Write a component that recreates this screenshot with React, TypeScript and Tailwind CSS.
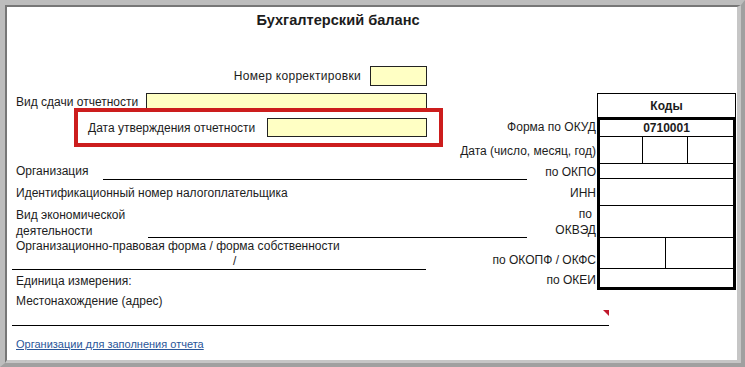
const CODE_ROWS = [
  { label: "Форма по ОКУД", h: "h-[20px]" },
  { label: "Дата (число, месяц, год)", h: "h-[27px]" },
  { label: "по ОКПО", h: "h-[15px]" },
  { label: "ИНН", h: "h-[27px]" },
];

function YellowBox({ className }: { className: string }) {
  return <div className={`bg-[#ffffc4] border border-[#222] ${className}`} />;
}

function CodesTable() {
  return (
    <div className="w-[139px] flex flex-col">
      <div className="h-[24px] border border-b-0 border-black flex items-center justify-center font-bold">
        Коды
      </div>
      <div className="border-[3px] border-t-[3px] border-black flex flex-col">
        <div className="h-[17px] border-b border-black flex items-center justify-center font-bold">0710001</div>
        <div className="h-[27px] border-b border-black grid grid-cols-[43px_45px_1fr]">
          <div className="border-r border-black" />
          <div className="border-r border-black" />
          <div />
        </div>
        <div className="h-[15px] border-b border-black" />
        <div className="h-[27px] border-b border-black" />
        <div className="h-[32px] border-b border-black" />
        <div className="h-[31px] border-b border-black grid grid-cols-[66px_1fr]">
          <div className="border-r border-black" />
          <div />
        </div>
        <div className="h-[18px]" />
      </div>
    </div>
  );
}

function CodeLabels() {
  return (
    <div className="w-[67px] flex flex-col items-stretch">
      <div className="h-[24px]" />
      {CODE_ROWS.map((r) => (
        <div key={r.label} className={`${r.h} flex items-center justify-end whitespace-nowrap pr-[1px]`}>
          {r.label}
        </div>
      ))}
      <div className="h-[32px] flex flex-col items-end justify-center leading-4 pr-[1px]">
        <span className="pr-[4px]">по</span>
        <span>ОКВЭД</span>
      </div>
      <div className="h-[31px] flex items-end justify-end whitespace-nowrap pb-[1px] pr-[1px] leading-4">
        по ОКОПФ / ОКФС
      </div>
      <div className="h-[21px] flex items-center justify-end whitespace-nowrap pr-[1px]">по ОКЕИ</div>
    </div>
  );
}

function LeftForm() {
  return (
    <div className="w-[523px] flex flex-col">
      <div className="flex items-center h-[18px] pl-[9px]">
        <span className="w-[130px] whitespace-nowrap">Вид сдачи отчетности</span>
        <YellowBox className="w-[281px] h-[18px]" />
      </div>

      <div className="relative z-10 -mt-[3px] ml-[67px] w-[369px] h-[39px] border-4 border-[#cc1d1d] flex items-center justify-between pl-[10px] pr-[12px]">
        <span className="whitespace-nowrap">Дата утверждения отчетности</span>
        <YellowBox className="w-[160px] h-[19px]" />
      </div>

      <div className="mt-[16px] flex h-[17px] pl-[9px]">
        <span className="w-[87px] leading-[17px]">Организация</span>
        <div className="w-[424px] h-full border-b border-black" />
      </div>

      <div className="mt-[5px] pl-[9px] leading-4 h-[16px]">Идентификационный номер налогоплательщика</div>

      <div className="mt-[6px] flex h-[31px] pl-[9px]">
        <div className="w-[132px] leading-4">
          <div>Вид экономической</div>
          <div>деятельности</div>
        </div>
        <div className="w-[379px] h-full border-b border-black" />
      </div>

      <div className="ml-[5px] w-[414px] border-b border-black">
        <div className="pl-[4px] leading-4 whitespace-nowrap">Организационно-правовая форма / форма собственности</div>
        <div className="pl-[221px] leading-[15px]">/</div>
      </div>

      <div className="mt-[3px] pl-[9px] leading-4">Единица измерения:</div>
    </div>
  );
}

export default function App() {
  return (
    <div className="w-[745px] h-[367px] bg-[#a9a9a9] border-l-[5px] border-t-[5px] border-l-[#bdbdbd] border-t-[#bdbdbd] border-r-[4px] border-b-[4px] border-r-[#a0a0a0] border-b-[#a0a0a0] font-['Liberation_Sans',Arial,sans-serif] text-[12px] text-[#1c1c1c]">
      <div className="h-full bg-white border-l-2 border-t-2 border-l-[#777] border-t-[#777] border-r-[4px] border-b-[3px] border-r-[#c6c6c6] border-b-[#c6c6c6] flex flex-col">
        <div className="pt-[5px] pr-[68px] text-center font-bold text-[14.6px] leading-[17px] h-[21px]">
          Бухгалтерский баланс
        </div>

        <div className="mt-[38px] w-[420px] flex items-center justify-end gap-[9px] h-[20px]">
          <span className="whitespace-nowrap tracking-[0.3px]">Номер корректировки</span>
          <YellowBox className="w-[57px] h-[20px]" />
        </div>

        <div className="mt-[7px] flex">
          <LeftForm />
          <CodeLabels />
          <CodesTable />
        </div>

        <div className="mt-[3px] pl-[9px] leading-4">Местонахождение (адрес)</div>
        <div className="relative ml-[5px] w-[597px] h-[17px] border-b border-black">
          <svg className="absolute right-0 top-[1px]" width="6" height="6" viewBox="0 0 6 6">
            <polygon points="0,0 6,0 6,6" fill="#c0192c" />
          </svg>
        </div>

        <a href="#" className="mt-[10px] pl-[9px] leading-4 text-[11px] text-[#2a5699] underline">
          Организации для заполнения отчета
        </a>
      </div>
    </div>
  );
}
